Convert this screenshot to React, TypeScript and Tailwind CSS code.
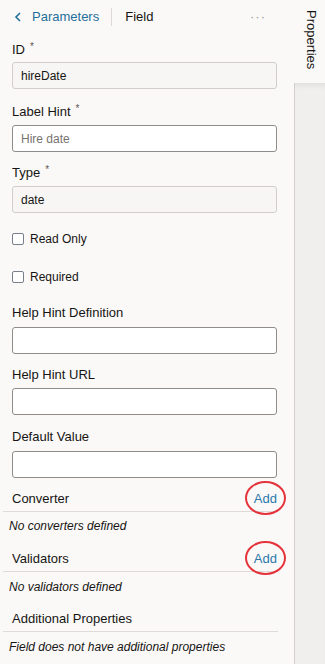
import React from 'react'

const font = { fontFamily: '"Liberation Sans", Arial, sans-serif' }

function Label({ text, required, className = '' }: { text: string; required?: boolean; className?: string }) {
  return (
    <div className={`flex items-start h-4 leading-4 text-[13px] text-[#161513] ${className}`}>
      <span>{text}</span>
      {required && <span className="ml-[5px] -mt-[3px] text-[10px] text-[#5b5856]">*</span>}
    </div>
  )
}

function ReadOnlyInput({ value, className = '' }: { value: string; className?: string }) {
  return (
    <div className={`h-[27px] rounded-[3px] border border-[#d0cdca] bg-[#f7f6f4] px-[8px] flex items-center text-[12px] text-[#161513] ${className}`}>
      {value}
    </div>
  )
}

function TextInput({ placeholder, className = '' }: { placeholder?: string; className?: string }) {
  return (
    <div className={`h-[27px] rounded-[3px] border border-[#8f8c89] bg-white px-[8px] flex items-center text-[12px] text-[#77736f] ${className}`}>
      {placeholder}
    </div>
  )
}

function Checkbox({ label, className = '' }: { label: string; className?: string }) {
  return (
    <div className={`flex items-center h-4 gap-[6px] ${className}`}>
      <span className="w-3 h-3 rounded-[2px] border border-[#77808a] bg-white" />
      <span className="text-[12px] text-[#161513] leading-4">{label}</span>
    </div>
  )
}

// red annotation ring round the "Add" link
function AddLink() {
  return (
    <span className="relative text-[13px] text-[#2a78ab]">
      Add
      <span className="absolute -left-[9px] -right-[9px] -top-[8px] -bottom-[7px] rounded-[50%] border-[2.5px] border-[#e5333c]" />
    </span>
  )
}

function SectionHeader({ title, add, className = '' }: { title: string; add?: boolean; className?: string }) {
  return (
    <div className={`h-[26px] flex items-center justify-between border-b border-[#dedbd8] pl-[9px] pr-[1px] ${className}`}>
      <span className="text-[13px] text-[#161513]">{title}</span>
      {add && <AddLink />}
    </div>
  )
}

function Empty({ text, className = '' }: { text: string; className?: string }) {
  return <div className={`pl-[6px] h-4 leading-4 text-[12px] italic text-[#161513] ${className}`}>{text}</div>
}

export default function App() {
  return (
    <div style={font} className="w-[325px] h-[664px] flex bg-[#fbf9f8] overflow-hidden">
      {/* ── main panel ─────────────────────────────────────────── */}
      <div className="w-[294px] shrink-0">
        <div className="h-[34px] flex items-center pl-[14px] pr-[28px]">
          <svg width="8" height="10" viewBox="0 0 8 10" className="text-[#1f6f9b]">
            <path d="M6 1 L2 5 L6 9" fill="none" stroke="currentColor" strokeWidth="1.6" />
          </svg>
          <span className="ml-[10px] text-[13px] text-[#1f6f9b]">Parameters</span>
          <span className="ml-[12px] w-px h-[18px] bg-[#dcd9d6]" />
          <span className="ml-[13px] text-[13px] text-[#161513]">Field</span>
          <span className="ml-auto text-[13px] tracking-[1px] text-[#9a9794]">···</span>
        </div>

        <div className="pl-3 pr-[17px]">
          <Label text="ID" required className="mt-[8px]" />
          <ReadOnlyInput value="hireDate" className="mt-[4px]" />

          <Label text="Label Hint" required className="mt-[15px]" />
          <TextInput placeholder="Hire date" className="mt-[5px]" />

          <Label text="Type" required className="mt-[13px]" />
          <ReadOnlyInput value="date" className="mt-[5px]" />

          <Checkbox label="Read Only" className="mt-[18px]" />
          <Checkbox label="Required" className="mt-[22px]" />

          <Label text="Help Hint Definition" className="mt-[20px]" />
          <TextInput className="mt-[6px]" />

          <Label text="Help Hint URL" className="mt-[13px]" />
          <TextInput className="mt-[5px]" />

          <Label text="Default Value" className="mt-[14px]" />
          <TextInput className="mt-[6px]" />
        </div>

        <div className="ml-[3px] w-[275px]">
          <SectionHeader title="Converter" add className="mt-[8px]" />
          <Empty text="No converters defined" className="mt-[6px]" />

          <SectionHeader title="Validators" add className="mt-[12px]" />
          <Empty text="No validators defined" className="mt-[7px]" />

          <SectionHeader title="Additional Properties" className="mt-[11px]" />
          <Empty text="Field does not have additional properties" className="mt-[7px]" />
        </div>
      </div>

      {/* ── side tab strip ─────────────────────────────────────── */}
      <div className="flex-1 flex flex-col">
        <div className="h-[83px] flex justify-center pt-[10px] pl-[2px]">
          <span className="[writing-mode:vertical-rl] text-[13px] leading-4 text-[#161513]">Properties</span>
        </div>
        <div className="flex-1 border-l border-[#d2cfcc] bg-[#f1efed] shadow-[inset_0_6px_6px_-4px_rgba(0,0,0,0.08)]" />
      </div>
    </div>
  )
}
